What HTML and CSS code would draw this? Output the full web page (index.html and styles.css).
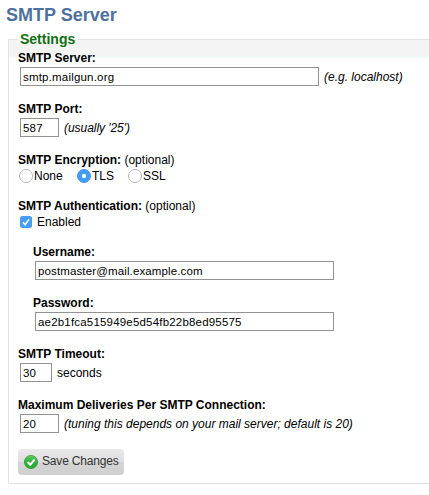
FILE: index.html
```html
<!DOCTYPE html>
<html lang="en">
<head>
<meta charset="utf-8">
<title>SMTP Server</title>
<link rel="stylesheet" href="styles.css">
</head>
<body>
<h1>SMTP Server</h1>
<form class="settings">
  <h2 class="legend"><span>Settings</span></h2>
  <div class="fields">
    <div class="field">
      <label class="label" for="server">SMTP Server:</label>
      <div class="row"><input class="text wide" id="server" type="text" value="smtp.mailgun.org"><em>(e.g. localhost)</em></div>
    </div>
    <div class="field">
      <label class="label" for="port">SMTP Port:</label>
      <div class="row"><input class="text small" id="port" type="text" value="587"><em class="port-hint">(usually '25')</em></div>
    </div>
    <div class="field choice">
      <div class="label">SMTP Encryption: <span class="optional">(optional)</span></div>
      <div class="row radios">
        <label class="none"><input type="radio" name="enc">None</label>
        <label class="tls"><input type="radio" name="enc" checked>TLS</label>
        <label><input type="radio" name="enc">SSL</label>
      </div>
    </div>
    <div class="field choice">
      <div class="label">SMTP Authentication: <span class="optional">(optional)</span></div>
      <label class="row check"><input type="checkbox" checked><svg class="tick" viewBox="0 0 12 12"><rect width="12" height="12" rx="2.5"/><path d="M3 6.3 5.1 8.7 9.1 3.2"/></svg><span>Enabled</span></label>
    </div>
    <div class="field nested">
      <label class="label" for="user">Username:</label>
      <div class="row"><input class="text wide user" id="user" type="text" value="postmaster@mail.example.com"></div>
    </div>
    <div class="field nested">
      <label class="label" for="pass">Password:</label>
      <div class="row"><input class="text wide" id="pass" type="text" value="ae2b1fca515949e5d54fb22b8ed95575"></div>
    </div>
    <div class="field">
      <label class="label" for="timeout">SMTP Timeout:</label>
      <div class="row"><input class="text tiny" id="timeout" type="text" value="30"><span class="unit">seconds</span></div>
    </div>
    <div class="field">
      <label class="label" for="max">Maximum Deliveries Per SMTP Connection:</label>
      <div class="row"><input class="text small" id="max" type="text" value="20"><em>(tuning this depends on your mail server; default is 20)</em></div>
    </div>
    <button class="save" type="button">
      <svg viewBox="0 0 14 14">
        <defs><linearGradient id="g" x2="0" y2="1"><stop stop-color="#63c967"/><stop offset=".5" stop-color="#2fae38"/><stop offset="1" stop-color="#22b12b"/></linearGradient></defs>
        <circle cx="7" cy="7" r="6.6" fill="url(#g)" stroke="#3c9a42" stroke-width=".8"/>
        <path d="M3.6 7.1 6.2 9.8 10.6 4.6" fill="none" stroke="#fff" stroke-width="2.1"/>
      </svg>
      <span>Save Changes</span>
    </button>
  </div>
</form>
</body>
</html>
```
FILE: styles.css
```css
* { box-sizing: border-box; }
body {
  margin: 0;
  height: 495px;
  overflow: hidden;
  background: #fff;
  color: #000;
  font: 12px/15px "Liberation Sans", Arial, sans-serif;
}
h1 {
  margin: 0;
  height: 39px;
  padding: 4px 0 0 6px;
  color: #4d719f;
  font-size: 18px;
  line-height: 22px;
}
.settings {
  height: 445px;
  margin-left: 8px;
  border: 1px solid #e2e2e2;
  border-right: 0;
  background: linear-gradient(#f4f4f4 16px, #f4faf9 16px, #f4faf9 18px, #fff 18px);
}
.legend {
  width: 60px;
  height: 18px;
  margin: -10px 0 0 9px;
  padding-left: 2px;
  background: linear-gradient(#fff 10px, transparent 10px);
  color: #107010;
  font-size: 14px;
  line-height: 18px;
}
.fields { padding: 2px 0 0 9px; }
.field { height: 51px; }
.choice { height: 46px; }
.nested { margin-left: 15px; }
.label {
  display: block;
  height: 17px;
  padding-top: 1px;
  font-weight: bold;
  white-space: pre;
}
.row {
  display: flex;
  align-items: center;
  height: 19px;
  white-space: nowrap;
}
.row em, .unit { padding-top: 2px; }
.port-hint { letter-spacing: -.05px; }
.text {
  height: 19px;
  margin: 0 5px 0 2px;
  padding: 1px 2px;
  border: 1px solid #929292;
  border-radius: 0;
  background: #fff;
  color: #000;
  font: 11.5px/15px "Liberation Sans", Arial, sans-serif;
  letter-spacing: .19px;
}
.wide { width: 299px; }
.small { width: 39px; }
.tiny { width: 32px; }
.user { letter-spacing: .13px; }
.optional { font-weight: normal; }
.radios { height: 14px; }
.radios label { display: flex; align-items: center; height: 14px; }
.radios input {
  appearance: none;
  width: 14px;
  height: 14px;
  margin: 0 1px;
  border: 1px solid #b5b5b5;
  border-radius: 50%;
  background: #fff;
}
.radios input:checked {
  border-color: #3b91f2;
  background: radial-gradient(circle, #fff 1.8px, #459df8 2.5px);
}
.none { width: 58px; }
.tls { width: 51px; }
.check { height: 14px; }
.check input { display: none; }
.tick { width: 12px; height: 12px; margin: 0 5px 0 2px; }
.tick rect { fill: #459df8; }
.tick path { fill: none; stroke: #fff; stroke-width: 1.6; }
.save {
  display: flex;
  align-items: center;
  width: 106px;
  height: 26px;
  margin: 1px 0 0;
  padding: 0 0 1px 6px;
  border: 0;
  border-radius: 4px;
  background: linear-gradient(#e9e9e9, #dedede 50%, #d4d4d4 50%, #d0d0d0);
  color: #333;
  font: 12px/15px "Liberation Sans", Arial, sans-serif;
  letter-spacing: -.18px;
  white-space: nowrap;
}
.save svg { width: 14px; height: 14px; margin: 1px 4px 0 0; }
```
